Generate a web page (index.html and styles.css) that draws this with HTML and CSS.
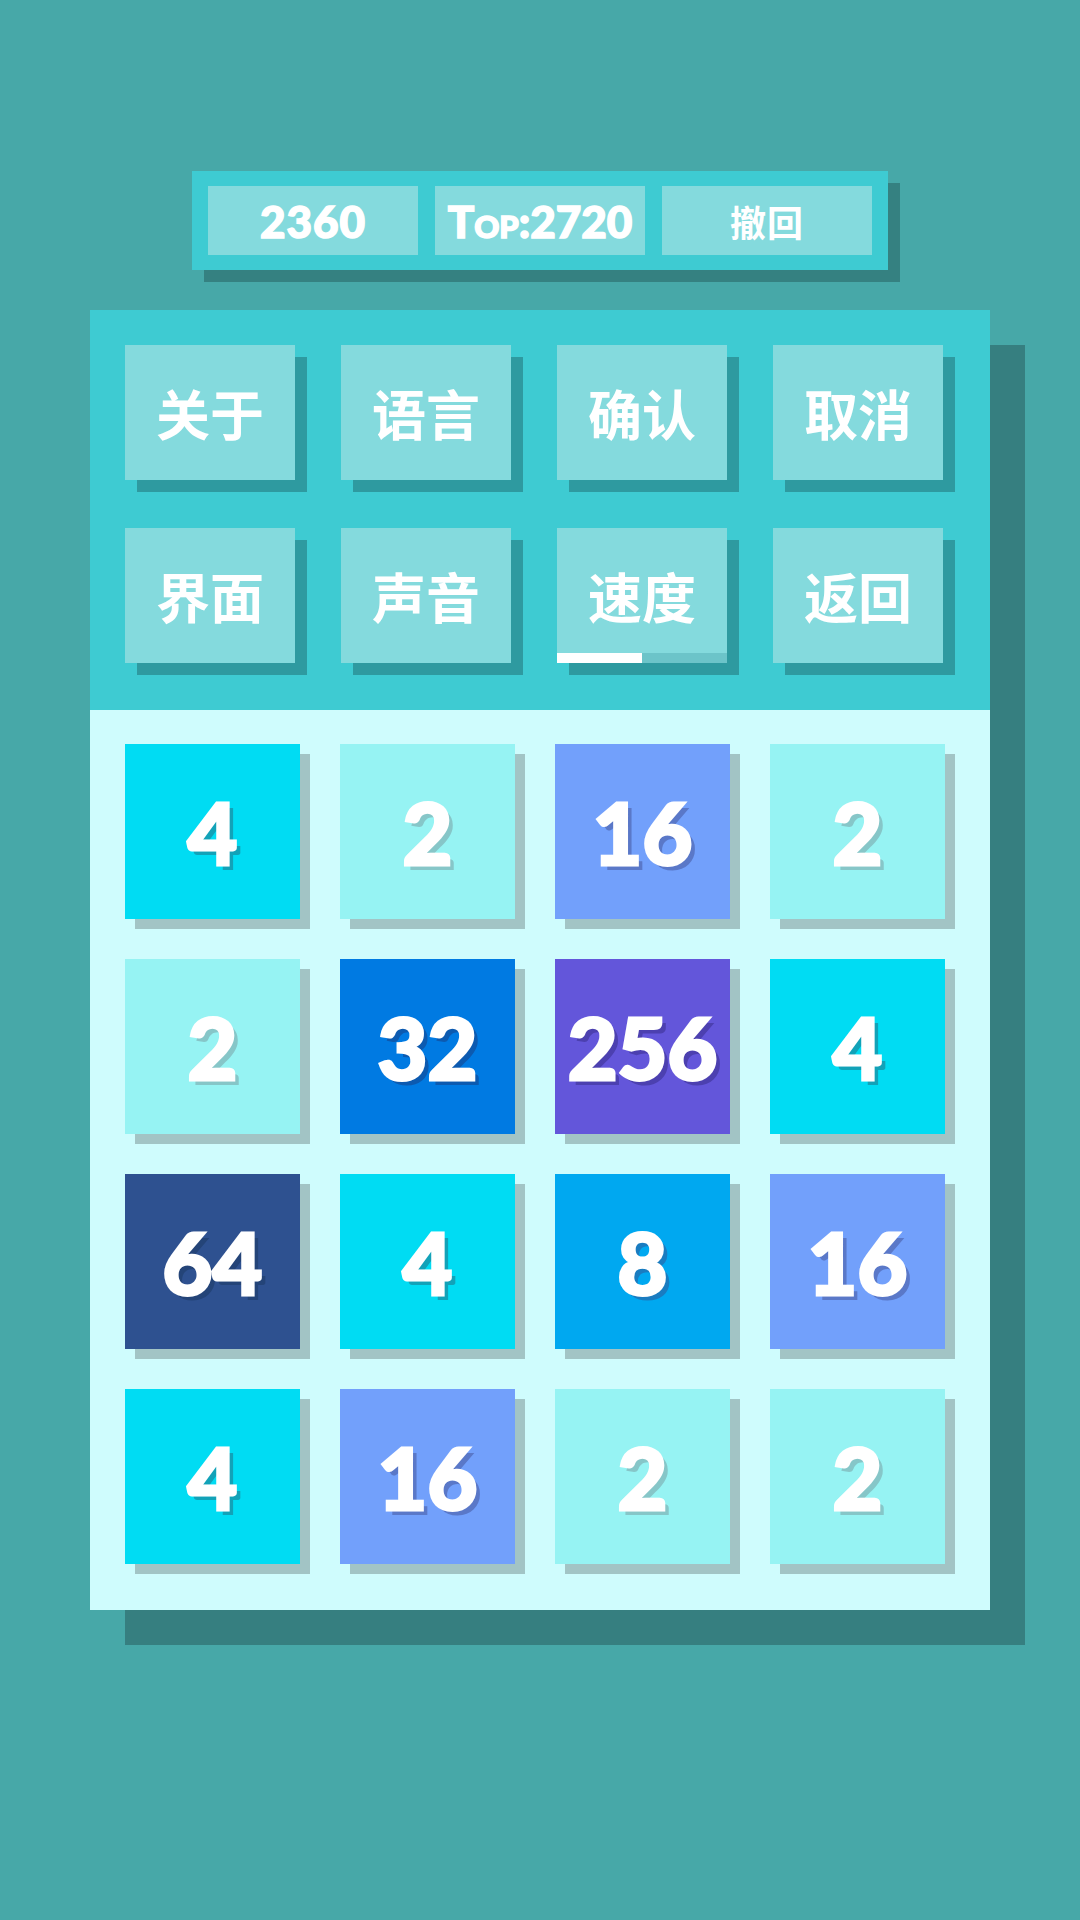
FILE: index.html
```html
<!DOCTYPE html>
<html lang="zh">
<head>
    <meta charset="UTF-8">
    <meta name="viewport" content="width=device-width, initial-scale=1.0">
    <title>2048</title>
    <link rel="stylesheet" href="styles.css">
</head>
<body>

    <div class="page">
        <div class="score-bar">
            <div class="score-cell">2360</div>
            <div class="score-cell top">Top:2720</div>
            <div class="score-cell cjk">撤回</div>
        </div>

        <div class="panel">
            <div class="menu">
                <div class="menu-button">关于</div>
                <div class="menu-button">语言</div>
                <div class="menu-button">确认</div>
                <div class="menu-button">取消</div>

                <div class="menu-button">界面</div>
                <div class="menu-button">声音</div>
                <div class="menu-button speed">
                    速度
                    <div class="speed-bar"><div class="speed-fill"></div></div>
                </div>
                <div class="menu-button">返回</div>
            </div>

            <div class="board">
                <div class="tile t4">4</div>
                <div class="tile t2">2</div>
                <div class="tile t16">16</div>
                <div class="tile t2">2</div>

                <div class="tile t2">2</div>
                <div class="tile t32">32</div>
                <div class="tile t256">256</div>
                <div class="tile t4">4</div>

                <div class="tile t64">64</div>
                <div class="tile t4">4</div>
                <div class="tile t8">8</div>
                <div class="tile t16">16</div>

                <div class="tile t4">4</div>
                <div class="tile t16">16</div>
                <div class="tile t2">2</div>
                <div class="tile t2">2</div>
            </div>
        </div>
    </div>

</body>
</html>
```

FILE: styles.css
```css
body {
    margin: 0;
    background: #47a8a8;
    font-family: 'Lato', 'Noto Sans CJK SC', sans-serif;
    color: #fff;
}

.page {
    width: 1080px;
    height: 1920px;
    padding-top: 171px;
    box-sizing: border-box;
    display: flex;
    flex-direction: column;
    align-items: center;
}

.score-bar {
    display: flex;
    gap: 17px;
    padding: 15px 16px;
    background: #3ecbd2;
    box-shadow: 12px 12px 0 #358181;
}

.score-cell {
    width: 210px;
    height: 69px;
    background: #84dadd;
    display: flex;
    justify-content: center;
    align-items: center;
    font-size: 44px;
    font-weight: 900;
    letter-spacing: 1px;
    -webkit-text-stroke: 1.5px #fff;
}

.score-cell.top {
    font-variant: small-caps;
    letter-spacing: 0;
}

.score-cell.cjk {
    font-family: 'Noto Sans CJK SC', sans-serif;
    font-size: 36px;
    font-weight: 700;
    -webkit-text-stroke: 0;
}

.panel {
    margin-top: 40px;
    width: 900px;
    box-shadow: 35px 35px 0 #367f80;
}

.menu {
    height: 400px;
    box-sizing: border-box;
    padding: 35px 0 0 35px;
    background: #3ecbd2;
    display: grid;
    grid-template-columns: repeat(4, 170px);
    grid-auto-rows: 135px;
    column-gap: 46px;
    row-gap: 48px;
}

.menu-button {
    position: relative;
    background: #84dadd;
    box-shadow: 12px 12px 0 #2e9aa0;
    display: flex;
    justify-content: center;
    align-items: center;
    font-family: 'Noto Sans CJK SC', sans-serif;
    font-size: 54px;
    font-weight: 700;
}

.speed-bar {
    position: absolute;
    left: 0;
    right: 0;
    bottom: 0;
    height: 10px;
    background: #6cc4c9;
}

.speed-fill {
    width: 50%;
    height: 100%;
    background: #fff;
}

.board {
    height: 900px;
    box-sizing: border-box;
    padding: 34px 35px;
    background: #cffcfd;
    display: grid;
    grid-template-columns: repeat(4, 175px);
    grid-auto-rows: 175px;
    gap: 40px;
}

.tile {
    display: flex;
    justify-content: center;
    align-items: center;
    box-shadow: 10px 10px 0 #a2c4c5;
    font-size: 86px;
    font-weight: 900;
    -webkit-text-stroke: 3px #fff;
}

.t2 {
    background: #96f3f3;
    text-shadow: 5px 5px 0 #86c6c8;
}

.t4 {
    background: #00dcf3;
    text-shadow: 5px 5px 0 #12a2b8;
}

.t8 {
    background: #00a8f0;
    text-shadow: 5px 5px 0 #1a7cc0;
}

.t16 {
    background: #72a0fb;
    text-shadow: 5px 5px 0 #5a78c8;
}

.t32 {
    background: #007ae2;
    text-shadow: 5px 5px 0 #0c5ab0;
}

.t64 {
    background: #2e5190;
    text-shadow: 5px 5px 0 #244478;
}

.t256 {
    background: #6356da;
    text-shadow: 5px 5px 0 #4c40b0;
}
```
